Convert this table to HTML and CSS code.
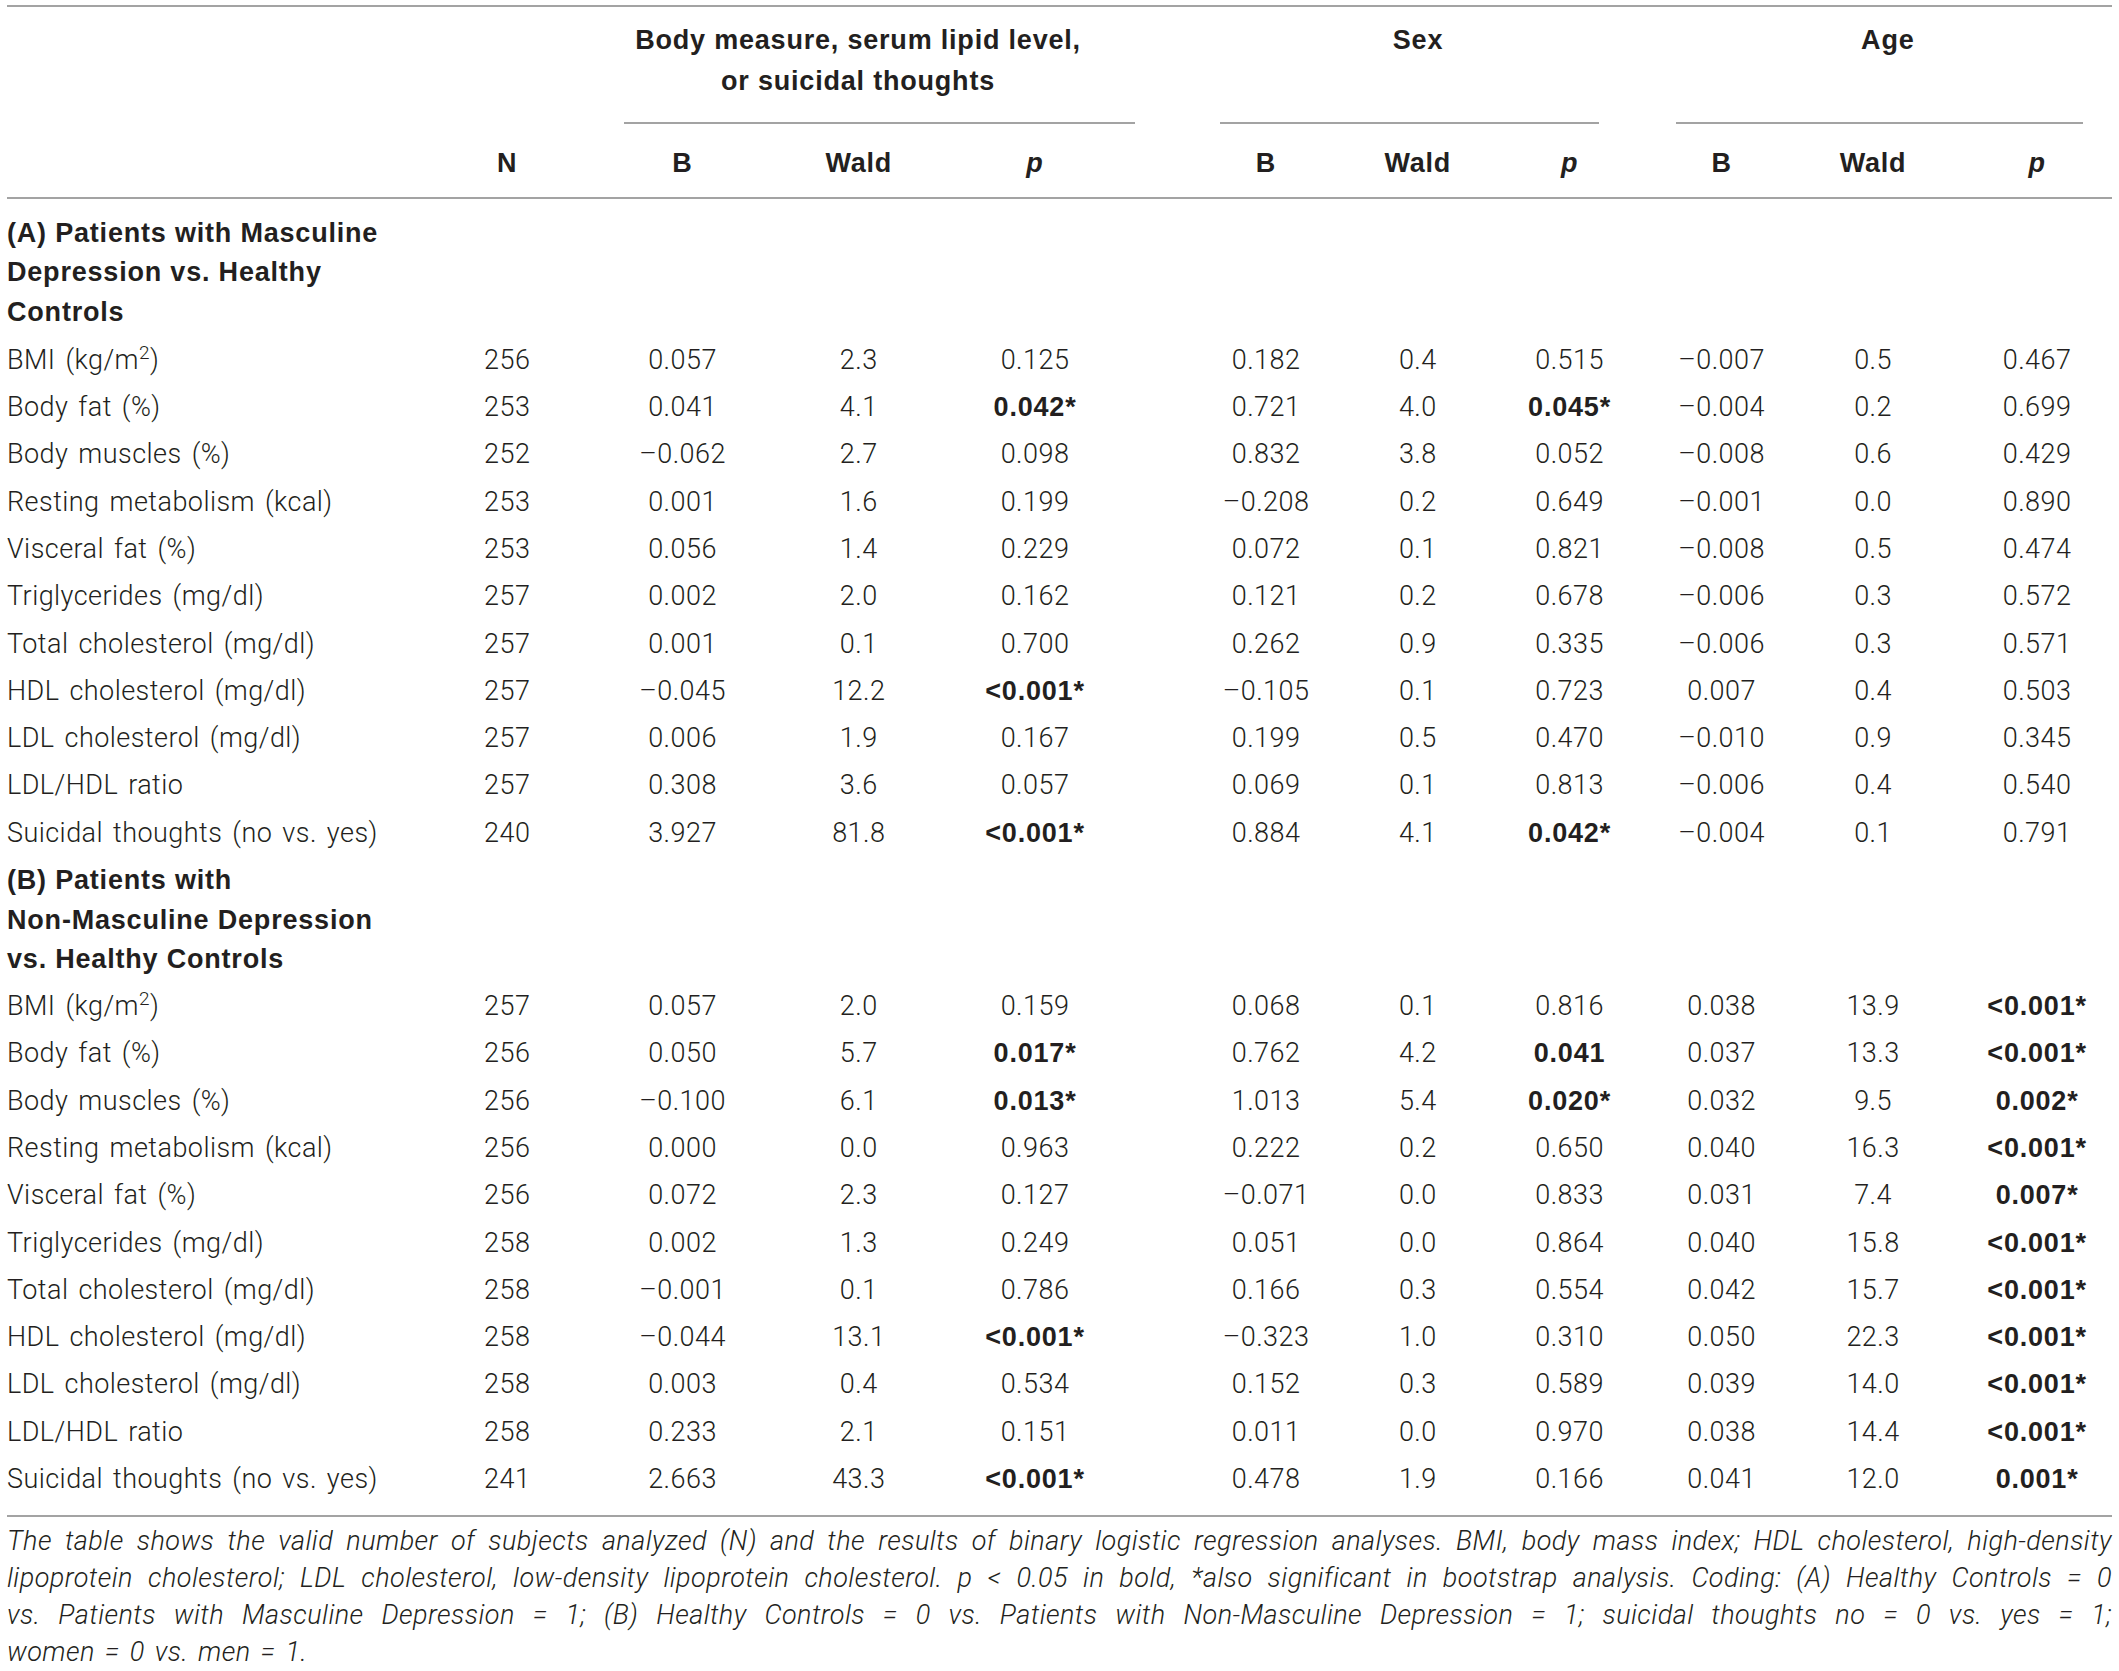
FILE: index.html
```html
<!DOCTYPE html>
<html lang="en">
<head>
<meta charset="utf-8">
<title>Table</title>
<link rel="stylesheet" href="styles.css">
</head>
<body>
<div class="wrap">
<table class="tbl">
  <colgroup>
    <col class="c-label"><col class="c-n"><col class="c-b1"><col class="c-w1"><col class="c-p1">
    <col class="c-b2"><col class="c-w2"><col class="c-p2"><col class="c-b3"><col class="c-w3"><col class="c-p3">
  </colgroup>
  <thead>
    <tr class="grp">
      <th></th>
      <th></th>
      <th colspan="3"><div class="gtext g1">Body measure, serum lipid level,<br>or suicidal thoughts</div><div class="uline u1"></div></th>
      <th colspan="3"><div class="gtext g2">Sex</div><div class="uline u2"></div></th>
      <th colspan="3"><div class="gtext g3">Age</div><div class="uline u3"></div></th>
    </tr>
    <tr class="sub">
      <th></th>
      <th>N</th>
      <th>B</th><th>Wald</th><th><i>p</i></th>
      <th>B</th><th>Wald</th><th><i>p</i></th>
      <th>B</th><th>Wald</th><th><i>p</i></th>
    </tr>
  </thead>
  <tbody>
    <tr class="sec first"><td class="lab">(A) Patients with Masculine<br>Depression vs. Healthy<br>Controls</td><td colspan="10"></td></tr>
    <tr><td class="lab">BMI (kg/m<sup>2</sup>)</td><td>256</td><td>0.057</td><td>2.3</td><td>0.125</td><td>0.182</td><td>0.4</td><td>0.515</td><td>–0.007</td><td>0.5</td><td>0.467</td></tr>
    <tr><td class="lab">Body fat (%)</td><td>253</td><td>0.041</td><td>4.1</td><td><b>0.042*</b></td><td>0.721</td><td>4.0</td><td><b>0.045*</b></td><td>–0.004</td><td>0.2</td><td>0.699</td></tr>
    <tr><td class="lab">Body muscles (%)</td><td>252</td><td>–0.062</td><td>2.7</td><td>0.098</td><td>0.832</td><td>3.8</td><td>0.052</td><td>–0.008</td><td>0.6</td><td>0.429</td></tr>
    <tr><td class="lab">Resting metabolism (kcal)</td><td>253</td><td>0.001</td><td>1.6</td><td>0.199</td><td>–0.208</td><td>0.2</td><td>0.649</td><td>–0.001</td><td>0.0</td><td>0.890</td></tr>
    <tr><td class="lab">Visceral fat (%)</td><td>253</td><td>0.056</td><td>1.4</td><td>0.229</td><td>0.072</td><td>0.1</td><td>0.821</td><td>–0.008</td><td>0.5</td><td>0.474</td></tr>
    <tr><td class="lab">Triglycerides (mg/dl)</td><td>257</td><td>0.002</td><td>2.0</td><td>0.162</td><td>0.121</td><td>0.2</td><td>0.678</td><td>–0.006</td><td>0.3</td><td>0.572</td></tr>
    <tr><td class="lab">Total cholesterol (mg/dl)</td><td>257</td><td>0.001</td><td>0.1</td><td>0.700</td><td>0.262</td><td>0.9</td><td>0.335</td><td>–0.006</td><td>0.3</td><td>0.571</td></tr>
    <tr><td class="lab">HDL cholesterol (mg/dl)</td><td>257</td><td>–0.045</td><td>12.2</td><td><b>&lt;0.001*</b></td><td>–0.105</td><td>0.1</td><td>0.723</td><td>0.007</td><td>0.4</td><td>0.503</td></tr>
    <tr><td class="lab">LDL cholesterol (mg/dl)</td><td>257</td><td>0.006</td><td>1.9</td><td>0.167</td><td>0.199</td><td>0.5</td><td>0.470</td><td>–0.010</td><td>0.9</td><td>0.345</td></tr>
    <tr><td class="lab">LDL/HDL ratio</td><td>257</td><td>0.308</td><td>3.6</td><td>0.057</td><td>0.069</td><td>0.1</td><td>0.813</td><td>–0.006</td><td>0.4</td><td>0.540</td></tr>
    <tr><td class="lab">Suicidal thoughts (no vs. yes)</td><td>240</td><td>3.927</td><td>81.8</td><td><b>&lt;0.001*</b></td><td>0.884</td><td>4.1</td><td><b>0.042*</b></td><td>–0.004</td><td>0.1</td><td>0.791</td></tr>
    <tr class="sec"><td class="lab">(B) Patients with<br>Non-Masculine Depression<br>vs. Healthy Controls</td><td colspan="10"></td></tr>
    <tr><td class="lab">BMI (kg/m<sup>2</sup>)</td><td>257</td><td>0.057</td><td>2.0</td><td>0.159</td><td>0.068</td><td>0.1</td><td>0.816</td><td>0.038</td><td>13.9</td><td><b>&lt;0.001*</b></td></tr>
    <tr><td class="lab">Body fat (%)</td><td>256</td><td>0.050</td><td>5.7</td><td><b>0.017*</b></td><td>0.762</td><td>4.2</td><td><b>0.041</b></td><td>0.037</td><td>13.3</td><td><b>&lt;0.001*</b></td></tr>
    <tr><td class="lab">Body muscles (%)</td><td>256</td><td>–0.100</td><td>6.1</td><td><b>0.013*</b></td><td>1.013</td><td>5.4</td><td><b>0.020*</b></td><td>0.032</td><td>9.5</td><td><b>0.002*</b></td></tr>
    <tr><td class="lab">Resting metabolism (kcal)</td><td>256</td><td>0.000</td><td>0.0</td><td>0.963</td><td>0.222</td><td>0.2</td><td>0.650</td><td>0.040</td><td>16.3</td><td><b>&lt;0.001*</b></td></tr>
    <tr><td class="lab">Visceral fat (%)</td><td>256</td><td>0.072</td><td>2.3</td><td>0.127</td><td>–0.071</td><td>0.0</td><td>0.833</td><td>0.031</td><td>7.4</td><td><b>0.007*</b></td></tr>
    <tr><td class="lab">Triglycerides (mg/dl)</td><td>258</td><td>0.002</td><td>1.3</td><td>0.249</td><td>0.051</td><td>0.0</td><td>0.864</td><td>0.040</td><td>15.8</td><td><b>&lt;0.001*</b></td></tr>
    <tr><td class="lab">Total cholesterol (mg/dl)</td><td>258</td><td>–0.001</td><td>0.1</td><td>0.786</td><td>0.166</td><td>0.3</td><td>0.554</td><td>0.042</td><td>15.7</td><td><b>&lt;0.001*</b></td></tr>
    <tr><td class="lab">HDL cholesterol (mg/dl)</td><td>258</td><td>–0.044</td><td>13.1</td><td><b>&lt;0.001*</b></td><td>–0.323</td><td>1.0</td><td>0.310</td><td>0.050</td><td>22.3</td><td><b>&lt;0.001*</b></td></tr>
    <tr><td class="lab">LDL cholesterol (mg/dl)</td><td>258</td><td>0.003</td><td>0.4</td><td>0.534</td><td>0.152</td><td>0.3</td><td>0.589</td><td>0.039</td><td>14.0</td><td><b>&lt;0.001*</b></td></tr>
    <tr><td class="lab">LDL/HDL ratio</td><td>258</td><td>0.233</td><td>2.1</td><td>0.151</td><td>0.011</td><td>0.0</td><td>0.970</td><td>0.038</td><td>14.4</td><td><b>&lt;0.001*</b></td></tr>
    <tr class="last"><td class="lab">Suicidal thoughts (no vs. yes)</td><td>241</td><td>2.663</td><td>43.3</td><td><b>&lt;0.001*</b></td><td>0.478</td><td>1.9</td><td>0.166</td><td>0.041</td><td>12.0</td><td><b>0.001*</b></td></tr>
  </tbody>
</table>
<div class="note">
  <div class="nl">The table shows the valid number of subjects analyzed (N) and the results of binary logistic regression analyses. BMI, body mass index; HDL cholesterol, high-density</div>
  <div class="nl">lipoprotein cholesterol; LDL cholesterol, low-density lipoprotein cholesterol. p &lt; 0.05 in bold, *also significant in bootstrap analysis. Coding: (A) Healthy Controls = 0</div>
  <div class="nl">vs. Patients with Masculine Depression = 1; (B) Healthy Controls = 0 vs. Patients with Non-Masculine Depression = 1; suicidal thoughts no = 0 vs. yes = 1;</div>
  <div class="nl end">women = 0 vs. men = 1.</div>
</div>
</div>
</body>
</html>
```

FILE: styles.css
```css
html, body {
  margin: 0;
  padding: 0;
  background: #ffffff;
}
body {
  color: #231f20;
  font-family: Roboto, "Liberation Sans", sans-serif;
  font-weight: 300;
  font-size: 27px;
  letter-spacing: 0.45px;
  word-spacing: 3px;
}
.wrap {
  padding: 5px 7px 0 7px;
}
.tbl {
  width: 100%;
  border-collapse: collapse;
  table-layout: fixed;
  border-top: 2px solid #a3a3a3;
  border-bottom: 2px solid #a3a3a3;
}
.c-label { width: 413px; }
.c-n { width: 174.5px; }
.c-b1 { width: 176px; }
.c-w1 { width: 176.5px; }
.c-p1 { width: 203.5px; }
.c-b2 { width: 191.5px; }
.c-w2 { width: 151.5px; }
.c-p2 { width: 152px; }
.c-b3 { width: 152px; }
.c-w3 { width: 157.5px; }
.c-p3 { width: 157px; }

th, td {
  padding: 0;
  text-align: center;
  white-space: nowrap;
}
th, .sec td, td b {
  font-family: "Liberation Sans", Arial, sans-serif;
  font-weight: 700;
  letter-spacing: 0.8px;
  word-spacing: 0;
}

/* column centring offsets */
.tbl td:nth-child(5), .sub th:nth-child(5) { padding-right: 27.5px; }
.tbl td:nth-child(6), .sub th:nth-child(6) { padding-left: 39.5px; }
.tbl td:nth-child(10), .sub th:nth-child(10) { padding-right: 6.5px; }
.tbl td:nth-child(11), .sub th:nth-child(11) { padding-left: 7px; }

.grp th {
  vertical-align: top;
  padding-top: 12.5px;
  line-height: 41px;
}
.gtext {
  height: 82px;
}
.g1 { padding-right: 29px; }
.g2 { padding-left: 40px; }
.g3 { padding-left: 18px; }
.uline {
  height: 2px;
  background: #a3a3a3;
  margin-top: 20px;
}
.u1 { margin-left: 29.5px; margin-right: 15.5px; }
.u2 { margin-left: 69.5px; margin-right: 46.5px; }
.u3 { margin-left: 30.5px; margin-right: 29px; }

.sub th {
  line-height: 41px;
  padding-top: 19.5px;
  padding-bottom: 12.5px;
  border-bottom: 2px solid #a3a3a3;
}

td {
  line-height: 47.3px;
}
td.lab {
  text-align: left;
}
sup {
  font-size: 19px;
  line-height: 0;
  vertical-align: 10px;
}
.sec td {
  line-height: 39.5px;
  padding-top: 4px;
  padding-bottom: 3.5px;
}
.sec.first td {
  padding-top: 15px;
  padding-bottom: 4.75px;
}
.last td {
  padding-bottom: 11.5px;
}

.note {
  margin-top: 6.5px;
  font-style: italic;
  font-weight: 300;
  font-size: 27px;
  line-height: 37px;
}
.nl {
  white-space: nowrap;
  text-align: justify;
  text-align-last: justify;
}
.nl.end {
  text-align: left;
  text-align-last: left;
}
```
